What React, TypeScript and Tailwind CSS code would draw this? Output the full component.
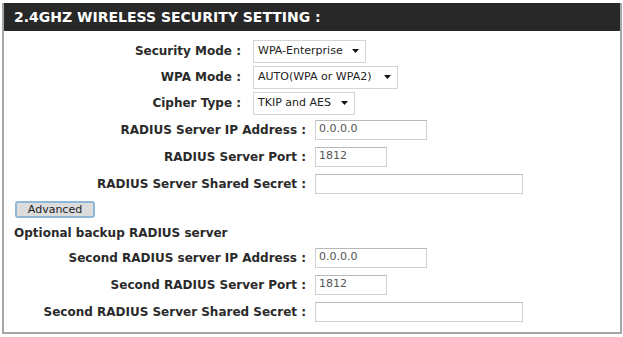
import React from 'react';

const labelCls = "text-right font-bold text-[12px] text-[#2a2a2a] whitespace-nowrap";
const font = { fontFamily: '"DejaVu Sans", Verdana, sans-serif' };

// Dropdown drawn as a plain box with a small arrow
const FakeSelect = ({ value, width }: { value: string; width: string }) => (
  <div className={`${width} h-[23px] border border-[#d4d4d4] bg-white flex items-center justify-between pl-[4px] pr-[6px]`}>
    <span className="text-[11px] text-[#222] whitespace-nowrap">{value}</span>
    <svg width="7" height="4" viewBox="0 0 7 4"><path d="M0 0 L7 0 L3.5 4 Z" fill="#111" /></svg>
  </div>
);

const FakeInput = ({ value, width }: { value?: string; width: string }) => (
  <div className={`${width} h-[20px] border border-[#d0d0d0] border-t-[#b8b8b8] bg-white flex items-center pl-[3px]`}>
    <span className="text-[11px] text-[#555]">{value}</span>
  </div>
);

const SelectRow = ({ label, value, width }: { label: string; value: string; width: string }) => (
  <div className="flex items-center h-[26px]">
    <div className={`w-[237px] ${labelCls}`}>{label}</div>
    <div className="ml-[12px]">
      <FakeSelect value={value} width={width} />
    </div>
  </div>
);

const InputRow = ({ label, value, width }: { label: string; value?: string; width: string }) => (
  <div className="flex items-center h-[27px]">
    <div className={`w-[302px] ${labelCls}`}>{label}</div>
    <div className="ml-[9px]">
      <FakeInput value={value} width={width} />
    </div>
  </div>
);

export default function App() {
  return (
    <div className="w-[623px] h-[337px] bg-white pt-[3px] pl-[2px]" style={font}>
      <div className="w-[620px] h-[331px] border-2 border-t-0 border-[#a6a6a6] flex flex-col">
        {/* Header */}
        <div className="h-[28px] bg-[#282828] flex items-center pl-[10px]">
          <span className="text-white font-bold text-[14px] whitespace-nowrap">2.4GHZ WIRELESS SECURITY SETTING :</span>
        </div>

        <div className="pt-[7px] flex flex-col">
          <SelectRow label="Security Mode :" value="WPA-Enterprise" width="w-[113px]" />
          <SelectRow label="WPA Mode :" value="AUTO(WPA or WPA2)" width="w-[145px]" />
          <SelectRow label="Cipher Type :" value="TKIP and AES" width="w-[102px]" />

          <InputRow label="RADIUS Server IP Address :" value="0.0.0.0" width="w-[112px]" />
          <InputRow label="RADIUS Server Port :" value="1812" width="w-[72px]" />
          <InputRow label="RADIUS Server Shared Secret :" width="w-[208px]" />

          {/* Advanced button */}
          <div className="h-[25px] flex items-center pl-[11px]">
            <div className="w-[80px] h-[17px] rounded-[3px] border-2 border-[#8fb8d8] bg-[#dcdcdc] flex items-center justify-center">
              <span className="text-[11px] text-[#222] leading-none">Advanced</span>
            </div>
          </div>

          <div className="h-[22px] flex items-center pl-[10px]">
            <span className="font-bold text-[12px] text-[#2a2a2a]">Optional backup RADIUS server</span>
          </div>

          <InputRow label="Second RADIUS server IP Address :" value="0.0.0.0" width="w-[112px]" />
          <InputRow label="Second RADIUS Server Port :" value="1812" width="w-[72px]" />
          <InputRow label="Second RADIUS Server Shared Secret :" width="w-[208px]" />
        </div>
      </div>
    </div>
  );
}
